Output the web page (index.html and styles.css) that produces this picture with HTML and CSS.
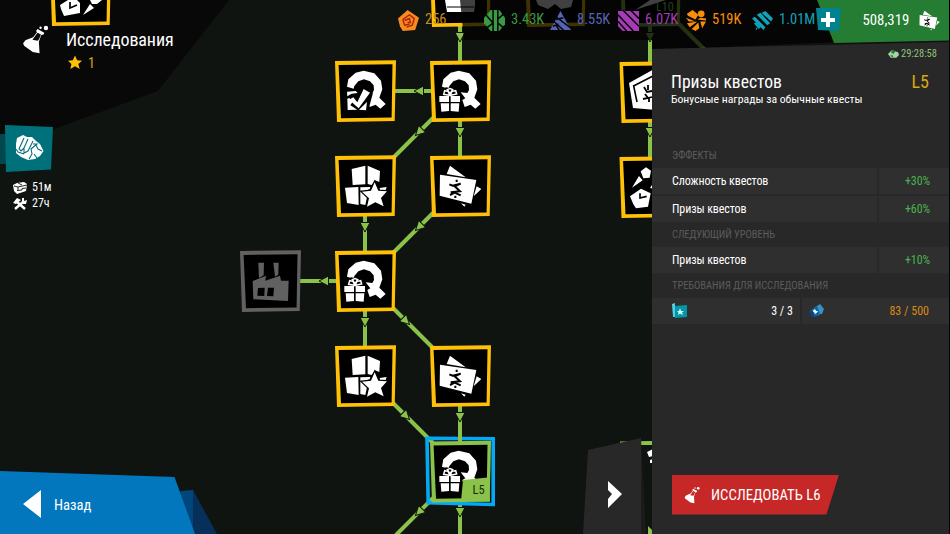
FILE: index.html
```html
<!DOCTYPE html>
<html lang="ru">
<head>
<meta charset="utf-8">
<title>Исследования</title>
<link rel="stylesheet" href="styles.css">
</head>
<body>
<main class="screen">
  <svg class="backdrop" viewBox="0 0 950 534"><path fill="#080808" d="M0 0H229L158 91L54 129L0 140Z"/></svg>

  <svg class="tree" viewBox="0 0 950 534">
    <defs>
      <g id="frame"><path d="M0 1L61 .3L59.7 61L2 62Z"/><path fill="#000" d="M3.6 4.9L57.5 4.2L56.6 57.5L6 58.2Z"/></g>
      <g id="q"><path d="M36 80L40 58L62 38L86 32L118 40L138 62L142 88L133 113L152 132L136 146L122 134L104 141L97 120L106 115L92 97L112 99L117 90L116 76L105 64L87 58L70 64L58 78L56 86Z"/></g>
      <g id="gift"><path fill="#000" d="M24 103L40 98L36 90L48 82L60 84L76 82L84 90L82 99L94 103L94 130L92 158H30L24 128Z"/><path d="M28 108H90V126H62V108H57V126H28ZM32 130H57V153L34 155ZM62 130H88L86 155L62 153Z"/><path fill="none" stroke="#fff" stroke-width="4.5" d="M58 106L41 103L44 92L54 94L60 106L66 94L77 92L80 102L62 106M52 89L60 86L68 89L60 101Z"/></g>
      <g id="questGift" transform="scale(.3333)" fill="#fff"><use href="#q"/><use href="#gift"/></g>
      <g id="questCheck" transform="scale(.3333)" fill="#fff"><use href="#q"/><path fill="#000" d="M30 88L62 90L88 80L114 98L98 158H30Z"/><path d="M36 95L62 93L68 99L50 101L37 109ZM37 116L43 114L53 125L46 136L67 149L38 150ZM72 149L96 126L93 151Z"/><path d="M42 119L55 112L67 127L86 87L105 98L71 145Z"/></g>
      <g id="boxes" transform="scale(.3333)" fill="#fff"><path d="M50 42L91 32V88L53 90ZM98 32L135 48L133 81L120 76L110 90L98 87ZM30 98L70 96L71 150L36 144ZM76 97L106 96L104 103L82 110L96 126L91 150L76 147ZM134 99L155 96L152 105L136 108Z"/><path stroke="#000" stroke-width="7" paint-order="stroke" d="M119 82L130 107L156 109L138 129L146 154L121 142L96 155L102 130L81 110L108 107Z"/></g>
      <g id="notes"><path d="M60 32L107 67L50 57ZM140 94L154 102L131 124ZM93 145L107 149L103 155Z"/><path d="M30 59L139 75L124 146L29 122Z"/><path fill="none" stroke="#000" stroke-width="6" d="M58 88L68 92L92 86L74 94L90 109L62 112M60 120L74 113L92 121M80 74V81M76 122V129"/></g>
      <g id="money" transform="scale(.3333)" fill="#fff"><use href="#notes"/></g>
      <g id="factory" transform="scale(.3333)" fill="#616161"><path d="M55 38H72L71 76L57 84ZM100 38H116L115 74L105 80ZM38 93L78 77L76 92L120 77L123 92H146L144 153L40 148Z"/><path fill="#000" d="M54 114L74 113L73 138L52 137ZM84 113H102L100 139L81 138Z"/></g>
      <g id="timer" transform="scale(.3333)" fill="#fff"><path d="M62 58L78 46L93 56L89 77L70 79ZM36 107L57 72L68 85ZM30 133L63 110L92 124L84 164L48 169L40 157Z"/><path fill="none" stroke="#000" stroke-width="5" d="M60 124V138L80 133"/><path d="M90 108L108 80V112Z"/></g>
      <path id="arrow" fill="#8bc34a" stroke="#10140f" stroke-width="1" d="M-5 -4.5H5L0 5Z"/>
      <g id="flask"><path fill-rule="evenodd" d="M3 55L10 45L33 36L44 22L42 17L46 12L66 23L64 28L57 30L50 50L52 84L32 80L7 62ZM46 23L56 28L51 41L47 47L31 44Z"/><circle cx="55" cy="8" r="3.500"/><circle cx="71" cy="9" r="6.500"/></g>
    </defs>

    <g fill="none" stroke="#8bc34a" stroke-width="4">
      <path d="M460 24V62M460 120V158M432 91H395M433 118L393 158M365 214V253M433 213L393 253M338 281H299M365 309V348M393 308L433 348M393 403L433 443M460 404V442M433 498L396 535M460 502V534M650 0V160M679 24L710 55"/>
    </g>
    <use href="#arrow" x="460" y="37"/><use href="#arrow" x="460" y="132"/>
    <use href="#arrow" transform="translate(419 91) rotate(90)"/>
    <use href="#arrow" transform="translate(419 132) rotate(45)"/>
    <use href="#arrow" x="365" y="227"/>
    <use href="#arrow" transform="translate(419 227) rotate(45)"/>
    <use href="#arrow" transform="translate(324 281) rotate(90)"/>
    <use href="#arrow" x="365" y="322"/>
    <use href="#arrow" transform="translate(406 321) rotate(-45)"/>
    <use href="#arrow" transform="translate(406 416) rotate(-45)"/>
    <use href="#arrow" x="460" y="417"/>
    <use href="#arrow" transform="translate(419 512) rotate(45)"/>
    <use href="#arrow" x="460" y="512"/>
    <use href="#arrow" x="650" y="37"/><use href="#arrow" x="650" y="132"/>

    <g fill="#ffc107">
      <use href="#frame" x="50" y="-36"/><use href="#frame" x="430" y="-35"/>
      <use href="#frame" x="525" y="-35"/>
      <use href="#frame" x="335" y="60"/><use href="#frame" x="430" y="60"/>
      <use href="#frame" x="335" y="155"/><use href="#frame" x="430" y="155"/>
      <use href="#frame" x="335" y="250"/>
      <use href="#frame" x="335" y="345"/><use href="#frame" x="430" y="345"/>
      <use href="#frame" x="619.5" y="61"/><use href="#frame" x="619.5" y="156"/>
    </g>
    <use href="#frame" x="240" y="250" fill="#616161"/>
    <use href="#frame" x="620" y="-35" fill="#8bc34a"/>
    <path fill="#8bc34a" d="M620 441.500L652 441V445H620ZM648 526L652 530V534H648Z"/>

    <path fill="#fff" d="M60 5L68 0H77L80 3V13L64 16L61 9ZM83 15L90 4L94 8ZM90 0H102L97 4H92Z"/>
    <path fill="none" stroke="#000" stroke-width="1.7" d="M70 2V8L77 5"/>
    <path fill="#fff" d="M445 0H475V5L474 12H447Z"/><path stroke="#000" d="M447 7H474"/>
    <path fill="#fff" d="M536 0H573L571 7L561 9L555 4L548 9L538 5ZM635 10L650 0H666Z"/>

    <use href="#questCheck" x="335" y="60"/><use href="#questGift" x="430" y="60"/>
    <use href="#boxes" x="335" y="155"/><use href="#money" x="430" y="155"/>
    <use href="#factory" x="240" y="250"/><use href="#questGift" x="335" y="250"/>
    <use href="#boxes" x="335" y="345"/><use href="#money" x="430" y="345"/>
    <use href="#timer" x="620" y="152"/>
    <path fill="#fff" d="M629 83L656 68V110L633 108Z"/>
    <path fill="none" stroke="#000" stroke-width="1.600" d="M633.500 86L653 76M633.500 85L637 102"/><path fill="none" stroke="#000" stroke-width="1.800" d="M644 87L647 92L652 91M643 99L648 98L645 94M648 98L652 97M648 85V90M649 97V102"/>
    <path fill="#fff" d="M647 452L653 449V456L649 457ZM650 460L653 459V463H650Z"/>

    <path fill="none" stroke="#03a9f4" stroke-width="3.6" d="M427 438.3L493.2 438.8L493.2 504.5L428.2 502.8Z"/>
    <use href="#frame" x="430" y="440.5" fill="#8bc34a"/>
    <path stroke="#8bc34a" stroke-width="4" d="M460 434V444"/>
    <use href="#questGift" x="430" y="440"/>
    <path fill="#8bc34a" d="M463 480L488 477.5L490 501.5H461Z"/>
    <text class="node-level" x="472.5" y="494" textLength="12" lengthAdjust="spacingAndGlyphs">L5</text>
  </svg>

  <svg class="shade" viewBox="0 0 950 534">
    <path fill="#000" fill-opacity=".75" d="M460 0H840V42L652 50V40H464Z"/>
    <path fill="#247d32" d="M817 0H949V40.5L834 43Z"/>
    <text class="dim-level" x="656" y="11">L10</text>
    <path fill="#1b1b1b" d="M641 438L646 534H641Z"/>
    <path fill="#282828" d="M588 450L641 438V534H583Z"/>
    <path fill="#fff" d="M608 481L622 494L608 508V499L612 494L608 490Z"/>
    <path fill="#282828" d="M652 49L949 42V534H652Z"/>
    <path fill="#000" d="M949 0H950V534H949Z"/>
    <path fill="#01467a" d="M180 491L193 490V534H185Z"/><path fill="#06305a" d="M193 490L217 534H193Z"/>
    <path fill="#0277bd" d="M0 471L174.500 477L195 534H0Z"/>
    <path fill="#fff" d="M23 504L41 490V518Z"/>
    <path fill="#00484e" d="M0 134H8V164H0Z"/><path fill="#00707a" d="M5 125L53 127L51 169.500L6 172Z"/>
    <path fill="#fff" d="M17 138L23 135L27 137L32 137L36 141L40 144L43.500 151L40 156L35 159L28 160L21 157L16 153L16 144Z"/>
    <path fill="none" stroke="#00707a" stroke-width="1.1" d="M24 138L19 149L21 151L24 148L28 139M24 148L24 153L28 151L33 141M33 144L37 144L31 149L32 154L29 159M16 149L18 152L24 154M36 145L38 149L42 151M34 154L37 158"/>
  </svg>

  <header class="heading">
    <svg class="heading-icon" viewBox="0 0 80 86"><use href="#flask"/></svg>
    <div class="heading-text">
      <h1><span class="fit">Исследования</span></h1>
      <p class="stars"><svg viewBox="0 0 16 16"><path fill="#ffc107" d="M8 .5L10.300 5.500L15.500 6L11.500 9.500L13 15L8 12L3 15L4.200 9.500L.5 6L5.700 5.500Z"/></svg><span>1</span></p>
    </div>
  </header>

  <section class="timers">
    <p><svg viewBox="0 0 14 12"><path fill="#fff" d="M0 3L4 1L11 0L14 2L13 9L4 12L1 9Z"/><path fill="none" stroke="#111" stroke-width=".9" d="M1 4L5 5L14 3M5 5V8M4 8.500L9 8V6.500L13 6M5 1L9 3"/></svg><span>51м</span></p>
    <p><svg viewBox="0 0 14 12"><path fill="none" stroke="#fff" stroke-width="2.400" d="M3 3L12 11M2 11L10 4"/><path fill="#fff" d="M0 5L4 0L8 2L3 6ZM9 0L11 0L11 3L14 2L13 6L9 6Z"/></svg><span>27ч</span></p>
  </section>

  <nav class="resources">
    <div class="res orange"><svg viewBox="0 0 22 22"><path d="M0 9L10 0L22 8L18 21L5 22L2 17Z"/><path class="ember" d="M5 10L12 5L17 9L15 16L9 18M7 11L12 9L13 13L10 13M5 10L7 16L12 15"/></svg><span>256</span></div>
    <div class="res green"><svg viewBox="0 0 22 22"><path d="M0 8L7 0H16L22 8V15L16 22H7L0 14Z"/><path class="cut wide" d="M9.500 0V22M14.500 0V22M1 4L9 13M0 21L9 14M15 9L22 3M15 14L22 20"/></svg><span>3.43K</span></div>
    <div class="res indigo"><svg viewBox="0 0 22 22"><path d="M11 1L22 21H0Z"/><path class="cut wide" d="M6 7L22 19M3 11L15 22M6 10L14 8M3 17L9 15M10 22L6 15"/></svg><span>8.55K</span></div>
    <div class="res purple"><svg viewBox="0 0 22 22"><path d="M0 1H22V22H5L0 17Z"/><path class="cut wide" d="M0 5L16 22M0 12L9 22M5 0L22 17M13 0L22 9"/></svg><span>6.07K</span></div>
    <div class="res amber"><svg viewBox="0 0 22 22"><path d="M2 4L8 0L14 5L11 10L3 6ZM1 8L11 12L4 12ZM2 14L13 12L5 18ZM7 20L14 13L15 19L11 22ZM16 12L22 12L18 19ZM13 10L16 8L22 9V11Z"/><circle cx="17" cy="4" r="3.500"/></svg><span>519K</span></div>
    <div class="res cyan"><svg viewBox="0 0 22 22"><path d="M0 9L3 7L14 18L12 21ZM5 5L9 3L19 14L16 16ZM10 3L14 1L22 9L20 12ZM2 14L4 13L9 18L7 20ZM4 18L6 20L4 21Z"/></svg><span>1.01M</span></div>
  </nav>

  <div class="wallet">
    <svg class="plus" viewBox="0 0 26 26"><path fill="#00838f" d="M1 1L26 1L24 24L3 23Z"/><path fill="#fff" d="M11 5H15V11H20V15H15V20H11V15H6V11H11Z"/></svg>
    <span class="fit">508,319</span>
    <svg class="cash" viewBox="26 28 130 130" fill="#fff"><use href="#notes"/></svg>
  </div>

  <aside class="panel">
    <p class="countdown"><svg viewBox="0 0 12 10"><path fill="#a5d6a7" d="M0 5L4 1L11 3L12 6L9 9L3 9Z"/><path fill="#2e7d32" d="M3 3L5 0L8 2L6 5ZM2 7L5 6L6 9Z"/></svg><span>29:28:58</span></p>
    <div class="title-row"><h2>Призы квестов</h2><strong>L5</strong></div>
    <p class="subtitle"><span class="fit">Бонусные награды за обычные квесты</span></p>
    <h3 class="first">ЭФФЕКТЫ</h3>
    <div class="stat"><span>Сложность квестов</span><b>+30%</b></div>
    <div class="stat second"><span>Призы квестов</span><b>+60%</b></div>
    <h3>СЛЕДУЮЩИЙ УРОВЕНЬ</h3>
    <div class="stat"><span>Призы квестов</span><b>+10%</b></div>
    <h3>ТРЕБОВАНИЯ ДЛЯ ИССЛЕДОВАНИЯ</h3>
    <div class="needs">
      <div class="need"><svg viewBox="0 0 16 16"><path fill="#4dd0e1" d="M0 1L3 0V14H1Z"/><path fill="#0097a7" d="M3 3L15 2V14L3 15Z"/><path fill="#e0f7fa" d="M8 5L9 8H12L10 9.500L11 12L8 10.500L6 12L6.500 9.500L5 8H7Z"/></svg><span>3 / 3</span></div>
      <div class="need lacking"><svg viewBox="0 0 16 16"><path fill="#1565a5" d="M1 9L8 3L13 4L12 12L5 14Z"/><path fill="#3594c4" d="M9 3L12 1L16 6L14 11L12 11Z"/><path fill="#0d3f7a" d="M1 9L5 7L6 14L3 14Z"/><path fill="#fff" d="M7 6L8 8L10 8L8.500 10L7 11L6 9L4.500 8Z"/></svg><span>83 / 500</span></div>
    </div>
    <button class="research"><svg viewBox="0 0 80 86"><use href="#flask"/></svg><span>ИССЛЕДОВАТЬ L6</span></button>
  </aside>

  <a class="back">Назад</a>
</main>
</body>
</html>
```
FILE: styles.css
```css
* { box-sizing: border-box; }
body { margin: 0; background: #10140f; }
h1, h2, h3, p { margin: 0; font-weight: 400; }

.screen {
  position: relative;
  width: 950px;
  height: 534px;
  overflow: hidden;
  background: #101411;
  color: #fff;
  font-family: "Roboto Condensed", Roboto, sans-serif;
  font-stretch: 75%;
  font-size: 13px;
  line-height: 1;
}
.backdrop, .tree, .shade { position: absolute; inset: 0; width: 950px; height: 534px; }
.node-level { font-size: 13px; fill: #1b2a10; }
.dim-level { font-size: 12px; fill: #26401a; }
.fit { display: inline-block; }

.heading { position: absolute; left: 22px; top: 25px; display: flex; gap: 17px; }
.heading-icon { width: 27px; height: 29px; fill: #fff; }
.heading h1 { font-size: 18px; line-height: 30px; letter-spacing: -0.1px; }
.stars { display: flex; align-items: center; gap: 5px; padding-left: 1px; color: #d9a514; font-size: 14px; line-height: 14px; }
.stars svg { width: 16px; height: 15px; }

.timers { position: absolute; left: 13px; top: 180px; display: grid; gap: 1px; }
.timers p { display: flex; align-items: center; gap: 5px; font-size: 12px; line-height: 15px; }
.timers svg { width: 14px; height: 12px; }

.resources {
  position: absolute; left: 398px; top: 9px;
  display: grid; grid-template-columns: 86px 66px 68px 67px 67px 64px;
}
.res { display: flex; align-items: center; gap: 6px; font-size: 14.5px; line-height: 24px; height: 22px; fill: currentColor; }
.res svg { flex: none; width: 21px; height: 21px; }
.cut { fill: none; stroke: #060706; stroke-width: 1.2; }
.cut.wide { stroke-width: 1.6; }
.ember { fill: none; stroke: #a8260c; stroke-width: 1.5; }
.orange { color: #f98a20; }
.orange span { color: #c98b20; }
.green { color: #3a9a45; }
.indigo { color: #5563b5; }
.purple { color: #a63bb8; }
.amber { color: #f98e0c; }
.cyan { color: #11a3bb; }

.wallet { position: absolute; left: 815px; top: 7px; display: grid; grid-template-columns: 47.5px 56.5px 22px; align-items: center; font-size: 14.8px; }
.plus { width: 26px; height: 26px; }
.cash { width: 21px; height: 21px; }

.panel { position: absolute; left: 652px; top: 47px; width: 297px; height: 487px; display: flex; flex-direction: column; }
.countdown { display: flex; justify-content: flex-end; align-items: center; gap: 2px; padding-right: 12px; font-size: 10.5px; line-height: 14px; color: #8fc17a; }
.countdown svg { width: 11px; height: 10px; }
.title-row { display: flex; justify-content: space-between; margin-top: 11px; padding: 0 20px 0 19px; font-size: 18px; line-height: 20px; }
.title-row h2 { font-size: 17.6px; }
.title-row strong { font-weight: 400; color: #dba60f; }
.subtitle { padding-left: 19px; font-size: 11.75px; line-height: 15px; }
.panel h3 { height: 25px; padding-left: 20px; font-size: 10.5px; line-height: 25px; letter-spacing: -0.05px; color: #5c5c5c; }
.panel h3.first { margin-top: 36px; line-height: 25px; }
.stat { display: grid; grid-template-columns: 225px 70px; gap: 2px; height: 26px; line-height: 26px; font-size: 12px; letter-spacing: -0.1px; }
.stat.second { margin-top: 2px; }
.stat span, .stat b { background: #2f2f2f; }
.stat span { padding-left: 20px; }
.stat b { padding-right: 19px; text-align: right; font-weight: 400; color: #4caf50; }
.needs { display: grid; grid-template-columns: 148px 147px; gap: 2px; }
.need { display: flex; justify-content: space-between; align-items: center; height: 26px; padding: 0 7px 0 20px; background: #2f2f2f; font-size: 12px; }
.need.lacking { padding: 0 20px 0 6px; color: #d98a16; }
.need svg { width: 16px; height: 16px; }
.research {
  display: flex; align-items: center; gap: 11px;
  width: 167px; height: 40px; margin: auto 0 19.5px 20px; padding: 1px 0 0 12px;
  border: 0; background: #c62828; color: #fff; fill: #fff;
  clip-path: polygon(0 0, 100% 0, 92.500% 100%, 0 100%);
  font: inherit; font-size: 14.7px;
}
.research svg { width: 16px; height: 18px; }

.back { position: absolute; left: 54px; top: 495px; font-size: 14.6px; line-height: 20px; }
```
